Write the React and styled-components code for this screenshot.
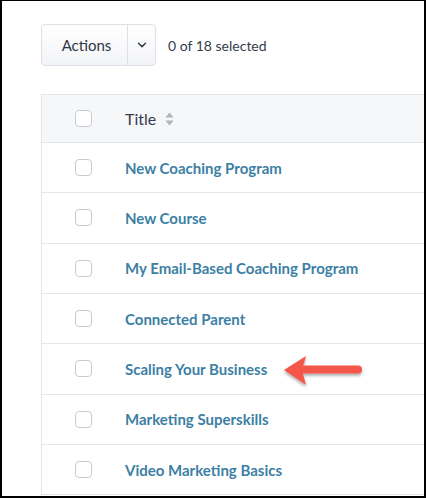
import React from "react";
import styled, { createGlobalStyle } from "styled-components";

const Global = createGlobalStyle`
  html, body { margin: 0; padding: 0; background: #fff; }
  * { box-sizing: border-box; }
`;

const Frame = styled.div`
  position: relative;
  width: 426px;
  height: 498px;
  border-style: solid;
  border-color: #000;
  border-width: 1px 2px 2px 2px;
  overflow: hidden;
  background: #fff;
  font-family: "Lato", "Open Sans", sans-serif;
`;

const Toolbar = styled.div`
  display: flex;
  align-items: center;
  gap: 12px;
  margin: 23px 0 0 39px;
`;

const ButtonGroup = styled.div`
  display: flex;
  height: 42px;
  border: 1px solid #dde0e7;
  border-radius: 4px;
  background: linear-gradient(#ffffff, #f3f4f7);
  overflow: hidden;
`;

const GroupButton = styled.button`
  display: flex;
  align-items: center;
  justify-content: center;
  width: ${(p) => p.$w}px;
  border: 0;
  border-left: ${(p) => (p.$divider ? "1px solid #dde0e7" : "0")};
  background: transparent;
  font-family: inherit;
  font-size: 15px;
  color: #2f3746;
  padding: 0 0 0 ${(p) => p.$pl || 0}px;
`;

const Count = styled.span`
  font-size: 14px;
  color: #353d4b;
`;

const Table = styled.div`
  margin: 28px 0 0 39px;
  border-left: 1px solid #e2e5eb;
  border-top: 1px solid #e2e5eb;
`;

const HeaderRow = styled.div`
  display: flex;
  align-items: center;
  height: 48px;
  background: #f6f7f9;
  border-bottom: 1px solid #e2e5eb;
`;

const Row = styled.div`
  display: flex;
  align-items: center;
  height: 50.33px;
  border-bottom: 1px solid #e4e6eb;
  background: #fff;
`;

const CheckCell = styled.div`
  width: 83px;
  padding-left: 33px;
  display: flex;
  align-items: center;
`;

const Checkbox = styled.span`
  display: block;
  width: 17px;
  height: 17px;
  border: 1px solid #c6cbd6;
  border-radius: 4px;
  background: #fff;
`;

const HeadTitle = styled.div`
  display: flex;
  align-items: center;
  gap: 9px;
  font-size: 16px;
  color: #343c4a;
`;

const LinkTitle = styled.a`
  font-size: 15px;
  font-weight: 700;
  color: #3c7fa4;
  text-decoration: none;
`;

const Arrow = styled.svg`
  position: absolute;
  left: 280px;
  top: 352px;
  overflow: visible;
`;

const rows = [
  "New Coaching Program",
  "New Course",
  "My Email-Based Coaching Program",
  "Connected Parent",
  "Scaling Your Business",
  "Marketing Superskills",
  "Video Marketing Basics",
];

export default function App() {
  return (
    <>
      <Global />
      <Frame>
        <Toolbar>
          <ButtonGroup>
            <GroupButton $w={85} $pl={4}>Actions</GroupButton>
            <GroupButton $w={28} $divider>
              <svg width="10" height="6" viewBox="0 0 10 6">
                <path d="M1.5 1.2 L5 4.6 L8.5 1.2" fill="none" stroke="#3a4250" strokeWidth="1.5" strokeLinecap="round" strokeLinejoin="round" />
              </svg>
            </GroupButton>
          </ButtonGroup>
          <Count>0 of 18 selected</Count>
        </Toolbar>
        <Table>
          <HeaderRow>
            <CheckCell><Checkbox /></CheckCell>
            <HeadTitle>
              Title
              <svg width="9" height="14" viewBox="0 0 9 14">
                <path d="M4.5 0.5 L8.5 5.5 L0.5 5.5 Z" fill="#aeb3bf" />
                <path d="M0.5 8.5 L8.5 8.5 L4.5 13.5 Z" fill="#aeb3bf" />
              </svg>
            </HeadTitle>
          </HeaderRow>
          {rows.map((r) => (
            <Row key={r}>
              <CheckCell><Checkbox /></CheckCell>
              <LinkTitle href="#">{r}</LinkTitle>
            </Row>
          ))}
        </Table>
        <Arrow width="84" height="36" viewBox="0 0 84 36">
          <defs>
            <filter id="sh" x="-20%" y="-40%" width="140%" height="200%">
              <feDropShadow dx="0" dy="2" stdDeviation="1.5" floodColor="#000" floodOpacity="0.35" />
            </filter>
          </defs>
          <g filter="url(#sh)">
            <path d="M22 16.5 L76 16.5" stroke="#f4564a" strokeWidth="8" strokeLinecap="round" />
            <path d="M2 17 L24 3 L20 17 L24 32 Z" fill="#f4564a" strokeLinejoin="round" />
          </g>
        </Arrow>
      </Frame>
    </>
  );
}
